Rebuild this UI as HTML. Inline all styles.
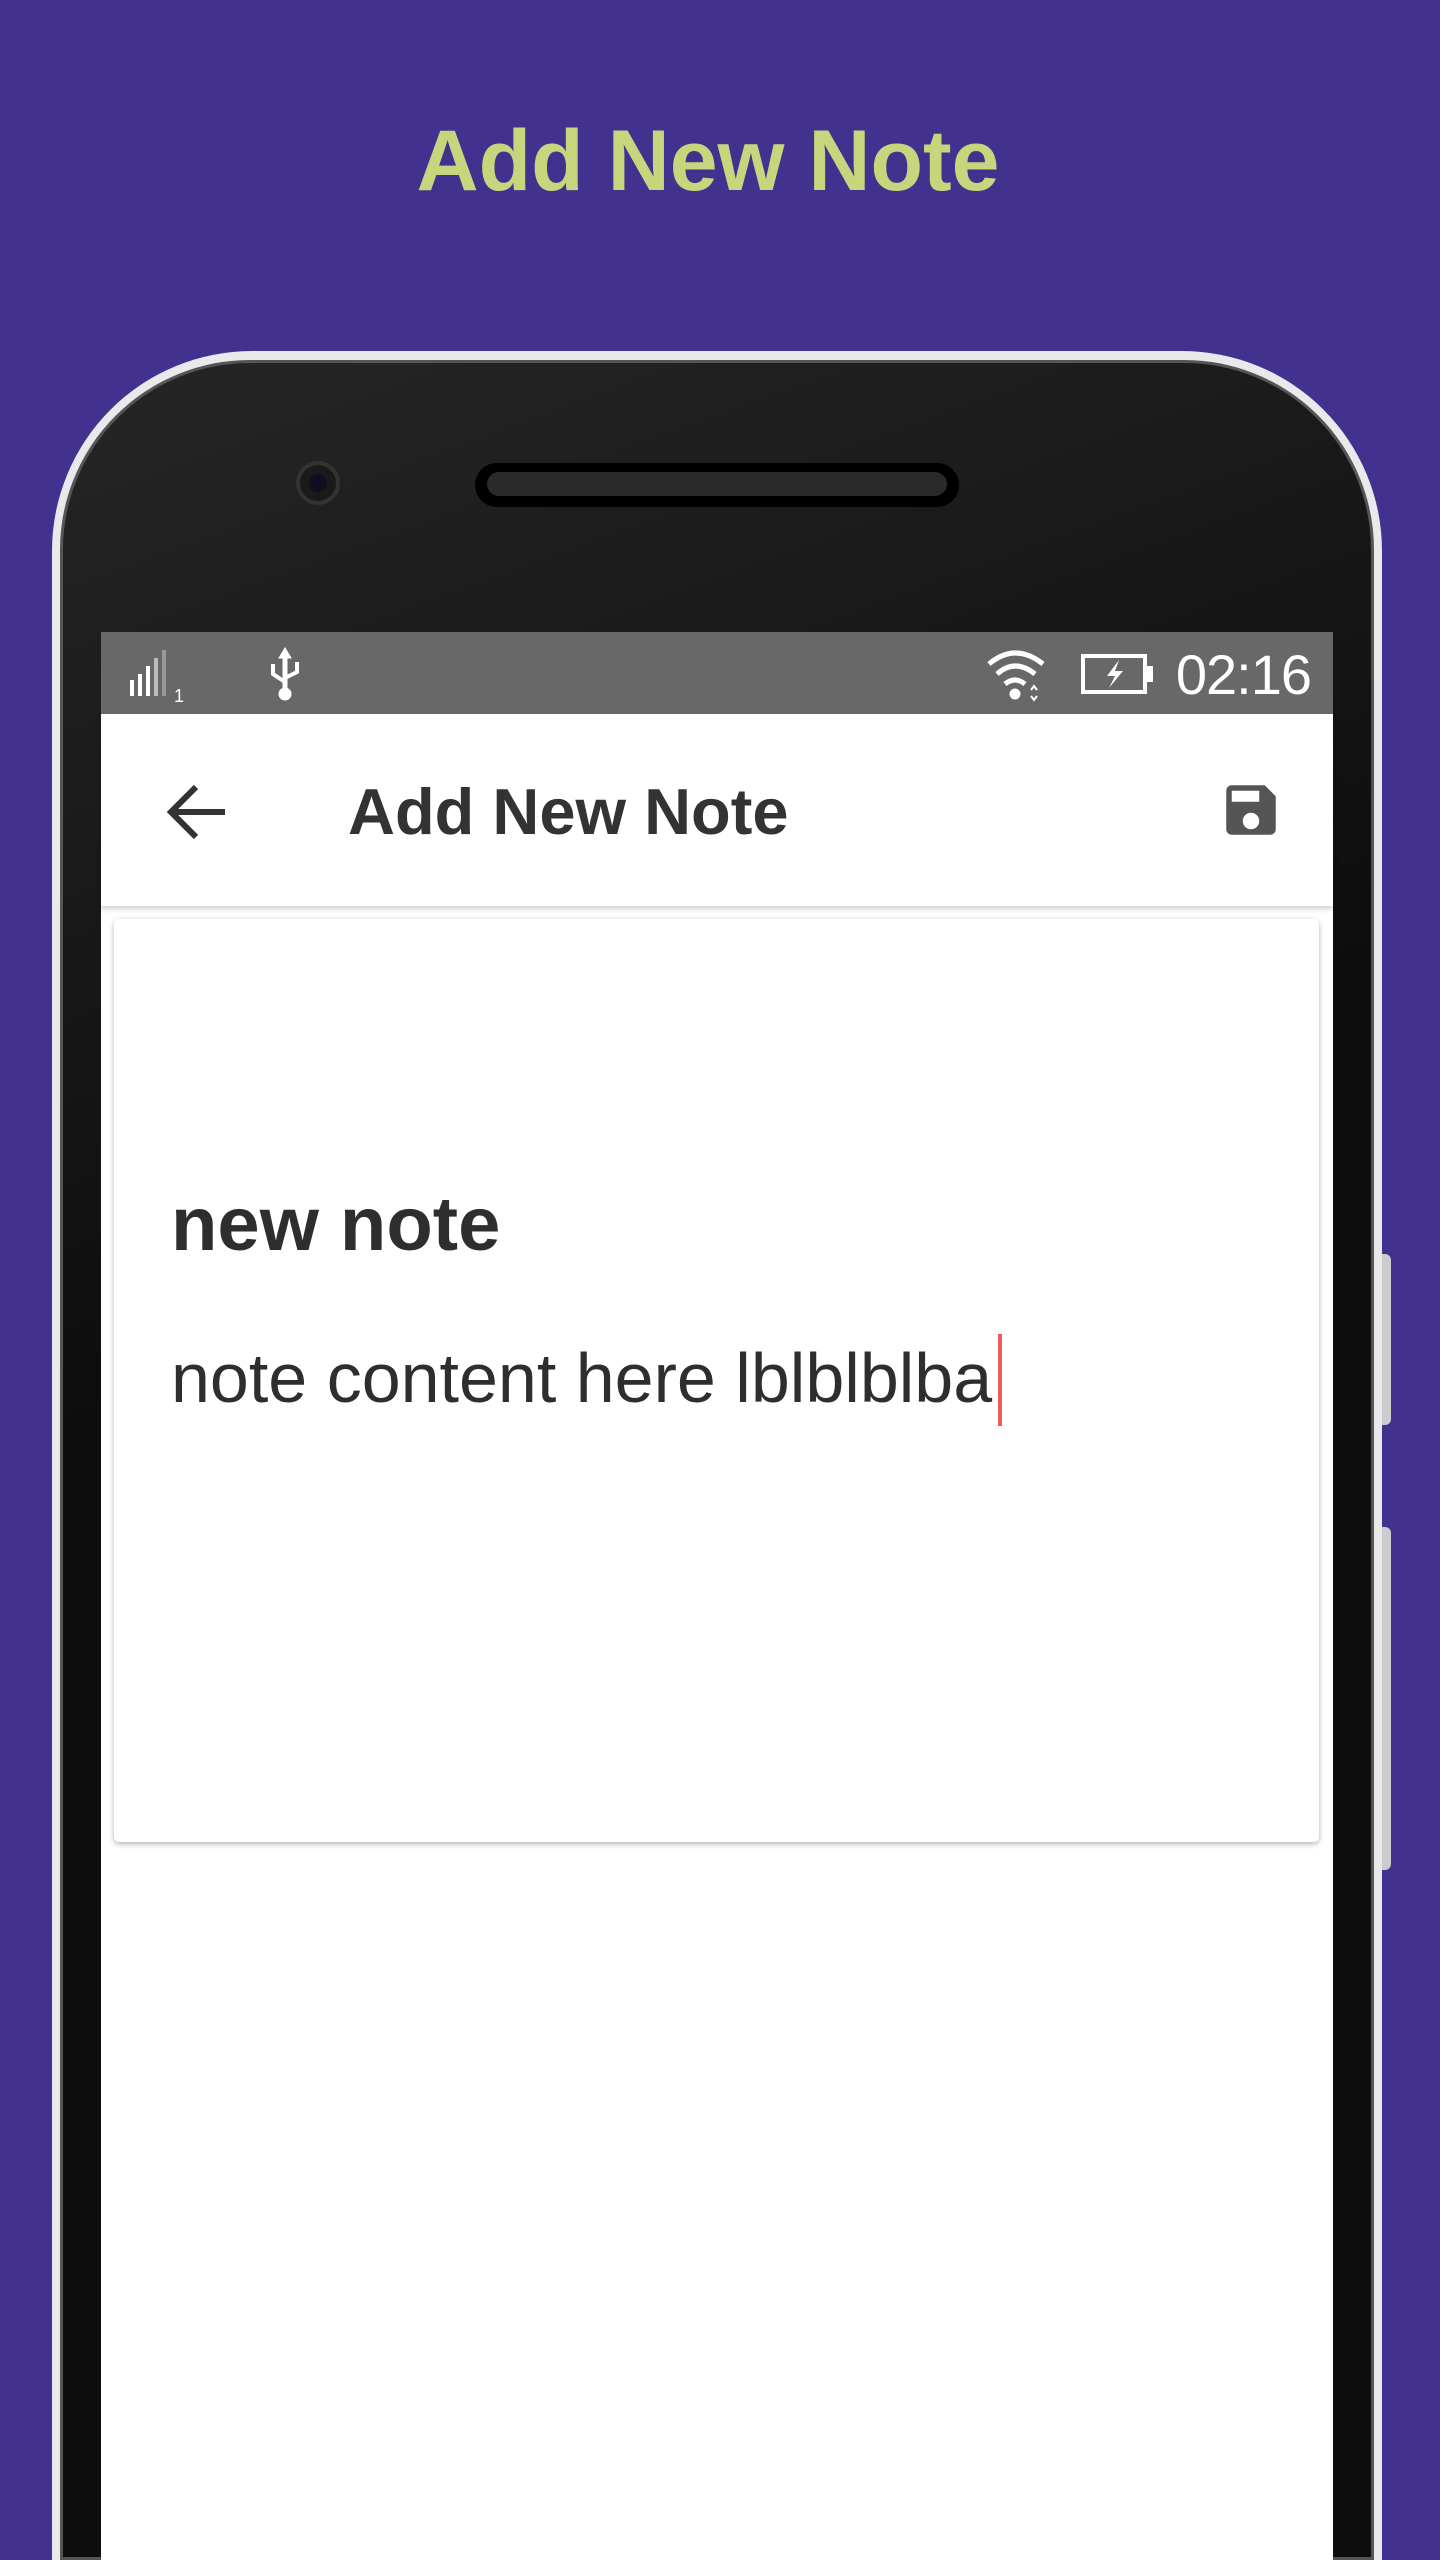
<!DOCTYPE html>
<html><head><meta charset="utf-8"><style>
*{margin:0;padding:0;box-sizing:border-box}
html,body{width:1440px;height:2560px;overflow:hidden}
body{background:#43318f;position:relative;font-family:"Liberation Sans",sans-serif}
.title{position:absolute;top:110px;left:-12px;width:1440px;text-align:center;font-weight:bold;font-size:86px;color:#c6d67c;line-height:1.2}
.outer{position:absolute;left:52px;top:351px;width:1330px;height:2209px;border-radius:200px 200px 0 0;background:#e9e9ec;}
.bez{position:absolute;left:60px;top:360px;width:1314px;height:2200px;border-radius:190px 190px 0 0;background:linear-gradient(160deg,#262626,#0d0d0d 40%);border:3px solid #555}
.btn{position:absolute;left:1380px;width:11px;background:#ccc;border-radius:0 6px 6px 0}
.cam{position:absolute;left:296px;top:461px;width:44px;height:44px;border-radius:50%;background:#1a1a1a;border:4px solid #333}
.cam:after{content:"";position:absolute;left:9px;top:9px;width:18px;height:18px;border-radius:50%;background:#0f0f22}
.spk{position:absolute;left:475px;top:463px;width:484px;height:44px;border-radius:22px;background:#000}
.spk:after{content:"";position:absolute;left:12px;top:9px;width:460px;height:24px;border-radius:12px;background:#2a2a2a}
.screen{position:absolute;left:101px;top:632px;width:1232px;height:1928px;background:#fff}
.status{position:absolute;left:0;top:0;width:1232px;height:82px;background:#686868}
.appbar{position:absolute;left:0;top:82px;width:1232px;height:192px;background:#fff;box-shadow:0 3px 5px rgba(0,0,0,.18)}
.apptitle{position:absolute;left:247px;top:60px;font-size:65px;font-weight:bold;color:#333}
.card{position:absolute;left:13px;top:287px;width:1205px;height:923px;background:#fff;border-radius:5px;box-shadow:0 2px 6px rgba(0,0,0,.3)}
.h{position:absolute;left:57px;top:262px;font-size:76px;font-weight:bold;color:#2e2e2e}
.c{position:absolute;left:57px;top:419px;font-size:70px;color:#2e2e2e;white-space:nowrap}
.cur{position:absolute;left:884px;top:415px;width:4px;height:92px;background:#f05a5a}
.time{position:absolute;right:22px;top:10px;font-size:56px;color:#fff;letter-spacing:-1px}
</style></head><body>
<div class="title">Add New Note</div>
<div class="btn" style="top:1254px;height:171px"></div>
<div class="btn" style="top:1527px;height:343px"></div>
<div class="outer"></div>
<div class="bez"></div>
<div class="cam"></div>
<div class="spk"></div>
<div class="screen">
 <div class="status">
  <svg style="position:absolute;left:29px;top:18px" width="60" height="52" viewBox="0 0 60 52" fill="#fff">
   <rect x="0" y="30" width="4" height="16"/><rect x="8" y="24" width="4" height="22"/><rect x="16" y="16" width="4" height="30"/><rect x="24" y="8" width="4" height="38" fill="#bbb"/><rect x="32" y="0" width="4" height="46" fill="#999"/>
   <text x="44" y="52" font-size="18" font-family="Liberation Sans">1</text>
  </svg>
  <svg style="position:absolute;left:164px;top:12px" width="40" height="60" viewBox="0 0 40 60" fill="#fff" stroke="#fff">
   <path d="M20 4 L14 14 H26 Z"/><line x1="20" y1="10" x2="20" y2="48" stroke-width="5"/>
   <path d="M8 20 V30 L20 38 M32 18 V28 L20 34" fill="none" stroke-width="4"/><circle cx="20" cy="50" r="6"/>
  </svg>
  <svg style="position:absolute;left:884px;top:14px" width="64" height="56" viewBox="0 0 64 56" fill="none" stroke="#fff" stroke-width="5">
   <path d="M4 18 Q30 -4 58 18"/><path d="M12 28 Q30 12 50 28"/><path d="M20 38 Q30 30 40 38"/><circle cx="30" cy="48" r="3" fill="#fff"/><path d="M46 44 l3 -4 3 4 M46 50 l3 4 3 -4" stroke-width="2"/>
  </svg>
  <svg style="position:absolute;left:980px;top:22px" width="74" height="40" viewBox="0 0 74 40">
   <rect x="2" y="2" width="62" height="36" fill="none" stroke="#fff" stroke-width="4"/><rect x="64" y="12" width="8" height="16" fill="#fff"/>
   <path d="M38 6 L26 22 H34 L28 34 L42 17 H34 Z" fill="#fff"/>
  </svg>
  <div class="time">02:16</div>
 </div>
 <div class="appbar">
  <svg style="position:absolute;left:66px;top:69px" width="60" height="58" viewBox="0 0 60 58" fill="none" stroke="#333" stroke-width="6">
   <path d="M58 29 H6 M29 4 L4 29 L29 54"/>
  </svg>
  <div class="apptitle">Add New Note</div>
  <svg style="position:absolute;left:1117px;top:63px" width="66" height="66" viewBox="0 0 24 24">
   <path fill="#555" d="M17 3H5a2 2 0 0 0-2 2v14a2 2 0 0 0 2 2h14a2 2 0 0 0 2-2V7l-4-4zm-5 16a3 3 0 1 1 0-6 3 3 0 0 1 0 6zm3-10H5V5h10v4z"/>
  </svg>
 </div>
 <div class="card">
  <div class="h">new note</div>
  <div class="c">note content here lblblblba</div>
  <div class="cur"></div>
 </div>
</div>
</body></html>
